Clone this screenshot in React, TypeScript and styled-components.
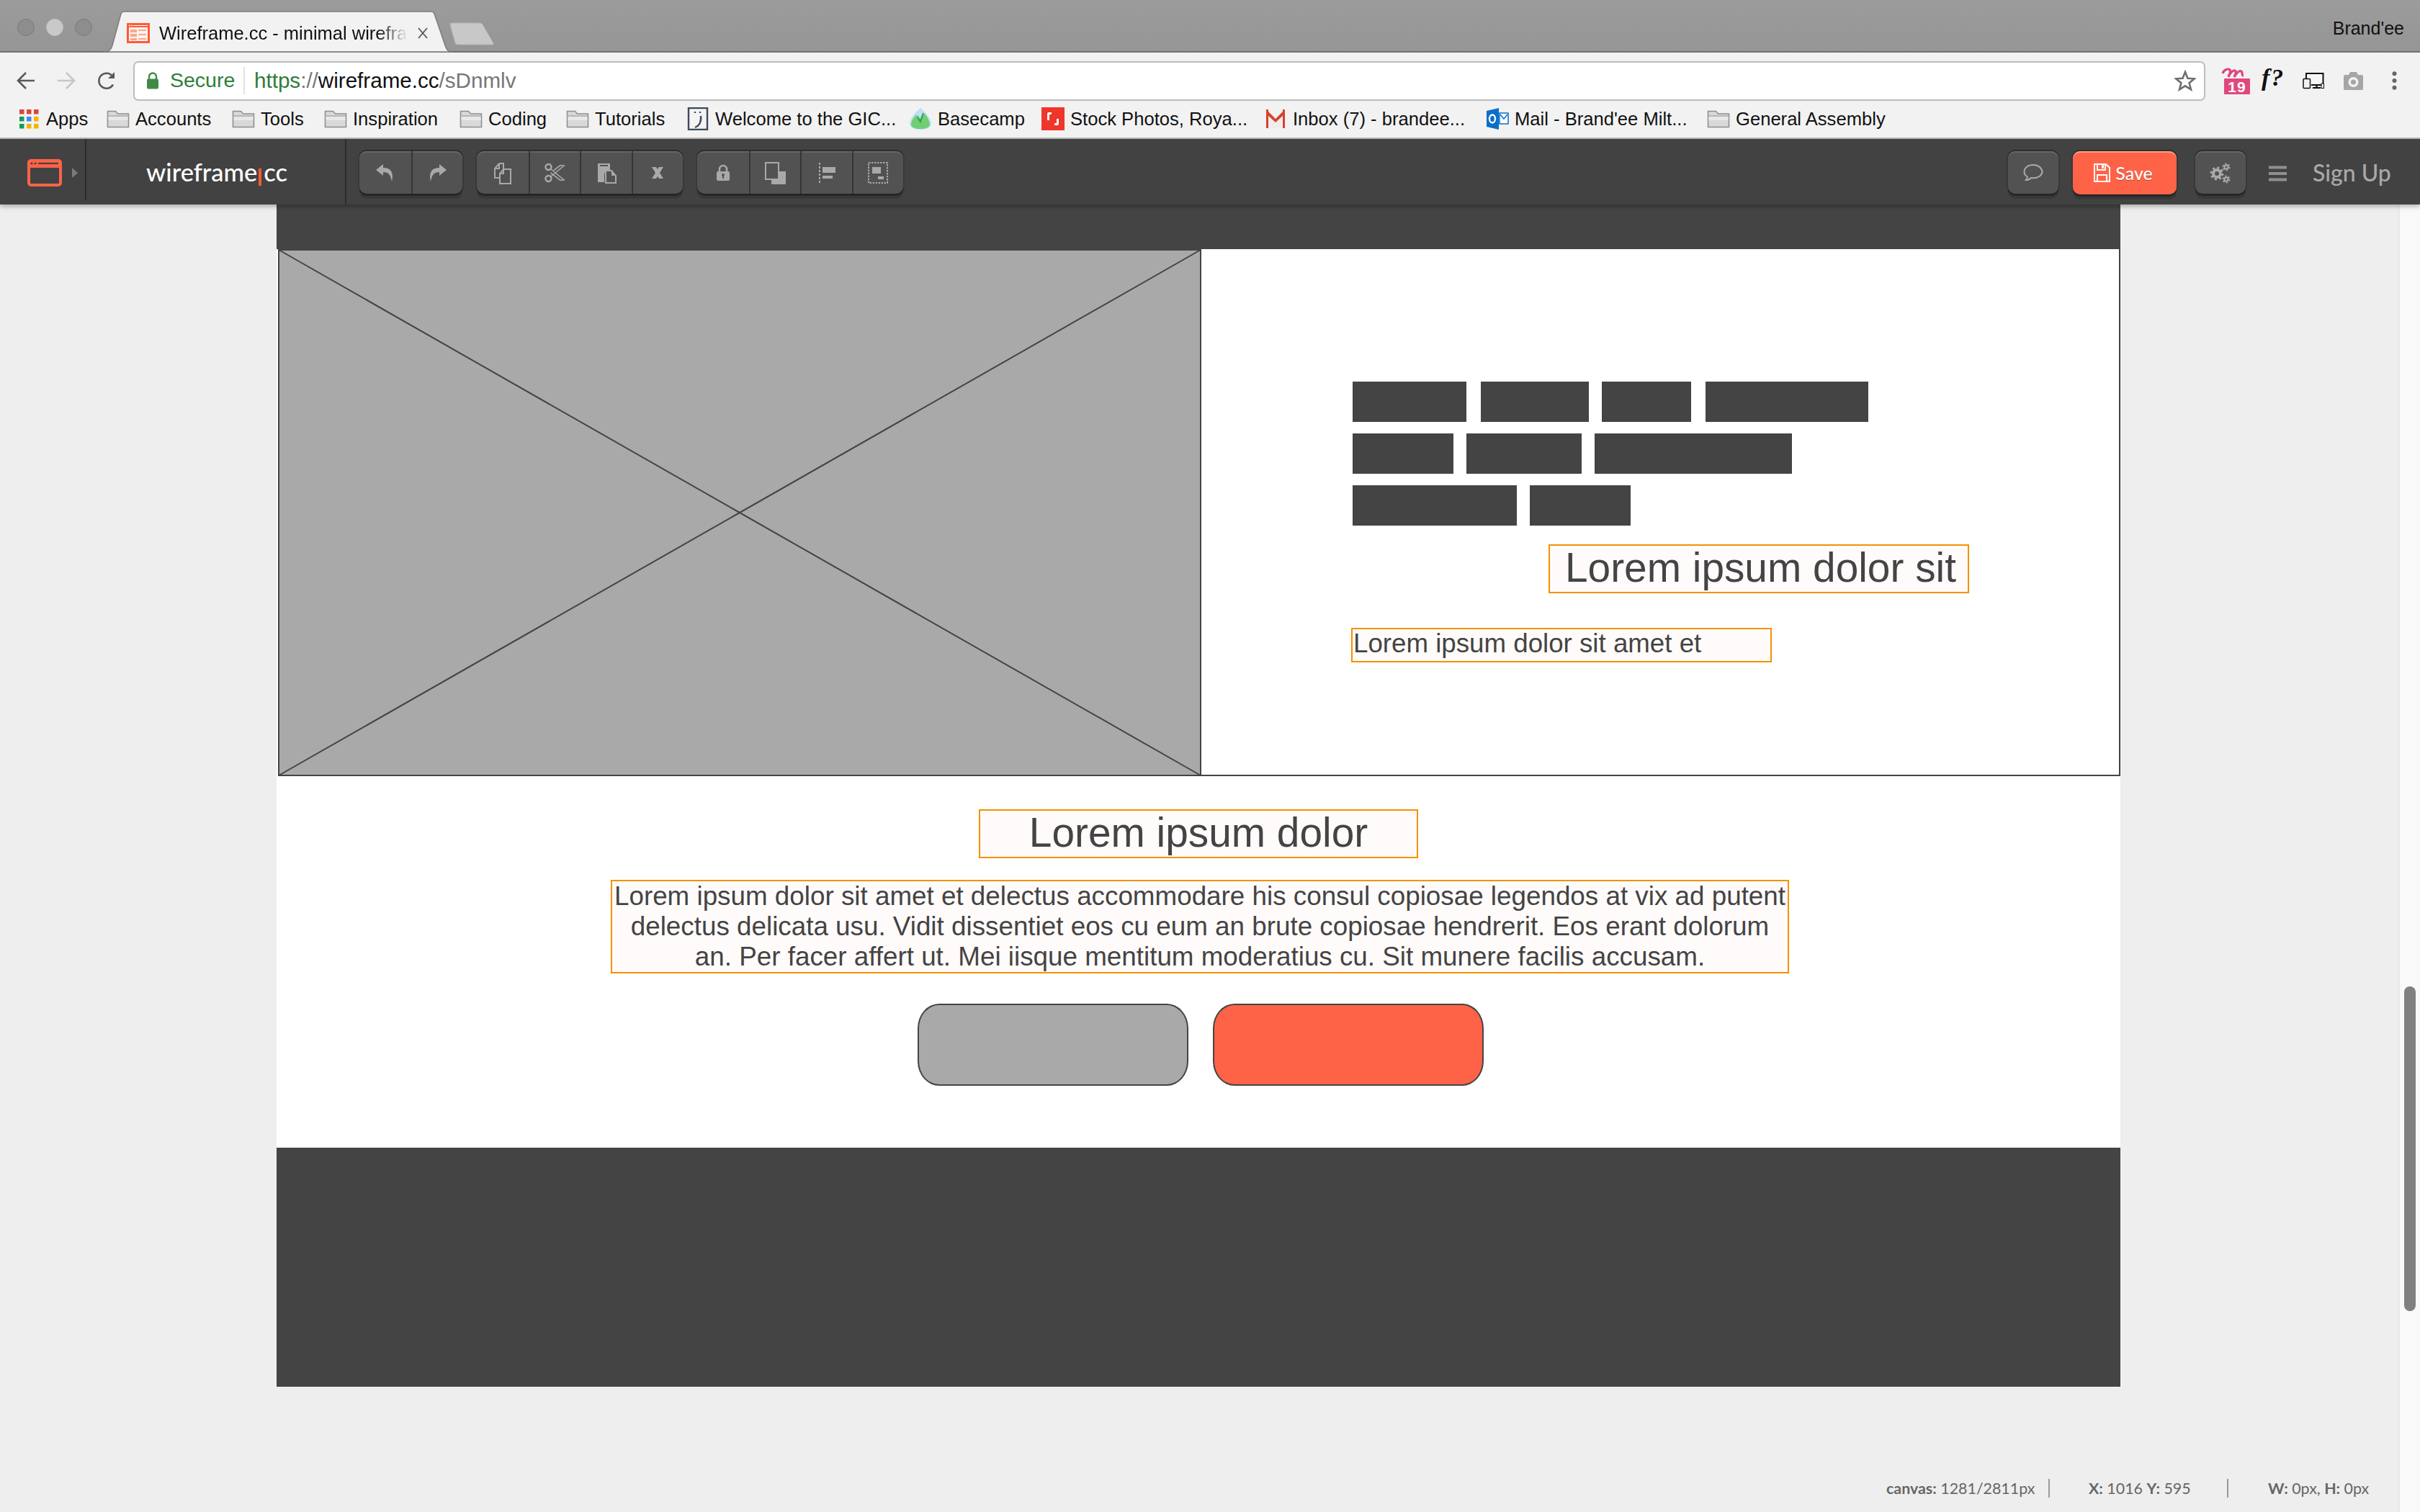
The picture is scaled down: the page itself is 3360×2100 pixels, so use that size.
import React from "react";
import styled, { createGlobalStyle } from "styled-components";

const UI = `"Liberation Sans", Arial, sans-serif`;
const LATO = `Lato, "Open Sans", sans-serif`;

const Global = createGlobalStyle`
  html, body { margin: 0; padding: 0; background: #eeeeee; overflow: hidden; }
  * { box-sizing: border-box; }
`;

const Page = styled.div`
  width: 3360px; height: 2100px; display: flex; flex-direction: column; background: #eeeeee; position: relative; overflow: hidden;
`;

/* ---------- browser chrome ---------- */
const TabStrip = styled.div`
  height: 73px; flex: none; display: flex; align-items: flex-end; padding-left: 24px;
  background: linear-gradient(#9c9c9c, #959595); border-bottom: 2px solid #717171; position: relative;
`;
const Lights = styled.div`
  display: flex; gap: 16px; align-self: flex-start; margin-top: 26px; width: 120px;
`;
const Light = styled.span<{ $on?: boolean }>`
  width: 24px; height: 24px; border-radius: 50%;
  background: ${p => (p.$on ? "#c9c9c9" : "#8d8d8d")};
  border: 1px solid ${p => (p.$on ? "#c0c0c0" : "#7a7a7a")};
`;
const Tab = styled.div`
  width: 484px; height: 58px; position: relative; flex: none; display: flex; align-items: center; padding: 4px 0 0 32px; margin-bottom: -2px;
`;
const TabShape = styled.svg`
  position: absolute; inset: 0; width: 100%; height: 100%;
`;
const TabIcon = styled.svg`
  width: 32px; height: 28px; position: relative; flex: none;
`;
const TabTitle = styled.span`
  position: relative; margin-left: 13px; width: 345px; overflow: hidden; white-space: nowrap;
  font: 25.5px ${UI}; color: #111;
  -webkit-mask-image: linear-gradient(90deg, #000 88%, transparent 100%);
  mask-image: linear-gradient(90deg, #000 88%, transparent 100%);
`;
const TabClose = styled.svg`
  position: relative; width: 14px; height: 16px; margin-left: 14px; flex: none;
`;
const NewTab = styled.svg`
  width: 64px; height: 32px; flex: none; margin: 0 0 8px -5px; position: relative;
`;
const Account = styled.span`
  position: absolute; right: 22px; top: 25px; font: 25px ${UI}; color: #111;
`;

const Chrome = styled.div`
  height: 120px; flex: none; background: #f2f2f2; border-bottom: 2px solid #b9b9b9; display: flex; flex-direction: column;
`;
const NavRow = styled.div`
  height: 70px; flex: none; display: flex; align-items: center; padding: 8px 0 0 22px;
`;
const NavIcon = styled.svg<{ $gap?: number }>`
  width: 28px; height: 28px; flex: none; margin-left: ${p => p.$gap ?? 0}px;
`;
const Omnibox = styled.div`
  flex: 1 1 auto; height: 55px; margin-left: 23px; background: #fff; border: 2px solid #bdbdbd; border-radius: 7px;
  display: flex; align-items: center; padding-left: 16px;
`;
const Lock = styled.svg`
  width: 18px; height: 24px; flex: none;
`;
const Secure = styled.span`
  font: 28.5px ${UI}; color: #2f7d38; margin-left: 15px; width: 104px; height: 38px; line-height: 36px; border-right: 2px solid #e2e2e2; flex: none;
`;
const Url = styled.span`
  font: 29.6px ${UI}; color: #777; margin-left: 13px; white-space: nowrap; flex: 1;
`;
const UrlScheme = styled.span`
  color: #2f7d38;
`;
const UrlHost = styled.span`
  color: #111;
`;
const Star = styled.svg`
  width: 30px; height: 30px; flex: none; margin-right: 11px;
`;
const Extensions = styled.div`
  width: 298px; flex: none; height: 56px; display: flex; align-items: center; padding-left: 22px;
`;
const ExtIcon = styled.svg<{ $w: number; $h: number; $gap?: number }>`
  width: ${p => p.$w}px; height: ${p => p.$h}px; flex: none; margin-left: ${p => p.$gap ?? 0}px; overflow: visible;
`;
const BookmarkRow = styled.div`
  height: 48px; flex: none; display: flex; align-items: center; padding: 0 0 4px 26px;
`;
const Bookmark = styled.div<{ $w: number }>`
  width: ${p => p.$w}px; flex: none; display: flex; align-items: center; gap: 8px;
  font: 25.6px ${UI}; color: #111; white-space: nowrap;
`;
const BmIcon = styled.svg`
  width: 32px; height: 32px; flex: none;
`;
const AppsIcon = styled(BmIcon)`
  width: 28px; height: 28px; margin-right: 2px;
`;

/* ---------- app toolbar ---------- */
const AppBar = styled.div`
  height: 91px; flex: none; background: #424242; display: flex; align-items: stretch; position: relative; z-index: 2;
  box-shadow: 0 3px 6px rgba(0, 0, 0, 0.28);
`;
const LogoCell = styled.div`
  width: 120px; height: 85px; flex: none; border-right: 2px solid #2b2b2b; display: flex; align-items: center; padding-left: 38px; gap: 14px;
`;
const LogoMark = styled.svg`
  width: 48px; height: 38px; flex: none; margin-top: 8px;
`;
const LogoCaret = styled.span`
  width: 0; height: 0; border-left: 8px solid #7b7b7b; border-top: 7px solid transparent; border-bottom: 7px solid transparent; margin-top: 8px;
`;
const BrandCell = styled.div`
  width: 361px; flex: none; border-right: 2px solid #2b2b2b; display: flex; align-items: center; padding: 0 0 0 83px;
  font: 500 34.5px ${LATO}; color: #fff;
`;
const BrandBar = styled.span`
  width: 4px; height: 24px; background: #ff5a36; margin: 14px 3px 0 2px; flex: none;
`;
const ToolGroups = styled.div`
  display: flex; align-items: flex-start; padding: 17px 0 0 18px; gap: 20px; flex: 1;
`;
const BtnGroup = styled.div`
  display: flex; border-radius: 10px; background: #525252; height: 59px; flex: none;
  box-shadow: 0 -2px 0 #2e2e2e, 0 3px 0 #262626, 0 7px 0 #383838, 0 0 0 2px #393939, inset 0 2px 0 #666;
`;
const ToolBtn = styled.div<{ $w?: number }>`
  width: ${p => p.$w ?? 71.5}px; height: 59px; display: flex; align-items: center; justify-content: center; flex: none;
  & + & { border-left: 2px solid #353535; }
`;
const ToolIcon = styled.svg`
  width: 32px; height: 32px; flex: none;
`;
const RightTools = styled.div`
  display: flex; align-items: flex-start; padding: 17px 0 0 0; flex: none;
`;
const SaveBtn = styled.div`
  width: 144px; height: 60px; margin: 0 26px 0 20px; border-radius: 10px; background: #ff6347; display: flex; align-items: center; justify-content: center; gap: 7px;
  color: #fff; font: 500 25px ${LATO}; flex: none; padding-right: 4px; text-shadow: 0 1px 0 rgba(120, 40, 20, .6);
  box-shadow: 0 -2px 0 #2e2e2e, inset 0 2px 0 #ff9d88, 0 3px 0 #262626, 0 7px 0 #383838, 0 0 0 2px #393939;
`;
const SaveIcon = styled.svg`
  width: 23px; height: 26px; flex: none;
`;
const Hamburger = styled.svg`
  width: 25px; height: 24px; flex: none; margin: 19px 36px 0 32px;
`;
const SignUp = styled.span`
  font: 500 32px ${LATO}; color: #a9a9a9; width: 149px; margin-top: 10px; flex: none; white-space: nowrap;
`;

/* ---------- editor ---------- */
const Editor = styled.div`
  flex: 1; display: flex; min-height: 0;
`;
const Stage = styled.div`
  flex: 1; padding-left: 384px; min-width: 0;
`;
const Canvas = styled.div`
  width: 2560px; background: #fff;
`;
const Band = styled.div<{ $h: number }>`
  height: ${p => p.$h}px; background: #444;
`;
const Hero = styled.div`
  height: 732px; display: flex;
`;
const Placeholder = styled.svg`
  width: 1282px; height: 732px; flex: none; margin-left: 2px; display: block;
`;
const HeroPanel = styled.div`
  flex: 1; border-right: 2px solid #444; border-bottom: 2px solid #444; padding: 184px 0 0 208px; display: flex; flex-direction: column;
`;
const BarRow = styled.div`
  display: flex; margin-bottom: 16px; padding-left: 2px;
`;
const Bar = styled.span<{ $w: number; $gap: number }>`
  width: ${p => p.$w}px; height: 56px; background: #444; margin-right: ${p => p.$gap}px; flex: none;
`;
const TextBox = styled.div`
  border: 2px solid #f39200; background: #fffbfa; color: #444; font-family: ${UI};
`;
const HeadingRight = styled(TextBox)`
  width: 584px; height: 68px; margin: 10px 0 0 274px; font-size: 56.8px; line-height: 62px; padding-left: 21px; white-space: nowrap;
`;
const SubLine = styled(TextBox)`
  width: 584px; height: 48px; margin-top: 48px; font-size: 36.7px; line-height: 40px; padding-left: 1px; white-space: nowrap;
`;
const Lower = styled.div`
  height: 516px; display: flex; flex-direction: column; align-items: center; padding-top: 46px;
`;
const HeadingCenter = styled(TextBox)`
  width: 610px; height: 68px; font-size: 56.8px; line-height: 62px; text-align: center; white-space: nowrap;
`;
const Paragraph = styled(TextBox)`
  width: 1636px; height: 130px; margin: 30px 0 0 4px; font-size: 36.8px; line-height: 42px; text-align: center; white-space: nowrap;
`;
const Actions = styled.div`
  display: flex; gap: 34px; margin: 42px 0 0 6px;
`;
const ActionBtn = styled.div<{ $bg: string }>`
  width: 376px; height: 114px; border-radius: 30px / 34px; border: 2px solid #444; background: ${p => p.$bg};
`;
const ScrollTrack = styled.div`
  width: 30px; flex: none; background: #f9f9f9; border-left: 2px solid #e8e8e8; padding: 1086px 0 0 6px;
`;
const ScrollThumb = styled.div`
  width: 16px; height: 451px; border-radius: 8px; background: #808080;
`;
const Status = styled.div`
  position: absolute; left: 2619px; top: 2054px; display: flex; align-items: center; height: 26px;
  font: 21.4px ${LATO}; color: #666; white-space: nowrap;
`;
const StatusCell = styled.span<{ $w: number; $sep?: boolean }>`
  width: ${p => p.$w}px; flex: none; height: 26px; line-height: 26px;
  border-right: ${p => (p.$sep ? "2px solid #999" : "0")};
  b { font-weight: 700; }
`;

const Folder = () => (
  <BmIcon viewBox="0 0 32 32">
    <path d="M1.5 27.500V5.500h11l3 3.500h15v18.500z" fill="#d9d9d9" stroke="#8f8f8f" strokeWidth="1.6" />
    <path d="M1.500 12h29" stroke="#a8a8a8" strokeWidth="1.4" />
    <path d="M2.500 13h27v5h-27z" fill="#e8e8e8" />
  </BmIcon>
);

const Icon = ({ d, fill = "#a9a9a9" }: { d: string; fill?: string }) => (
  <ToolIcon viewBox="0 0 32 32"><path d={d} fill={fill} /></ToolIcon>
);

export default function App() {
  return (
    <Page>
      <Global />
      <TabStrip>
        <Lights>
          <Light />
          <Light $on />
          <Light />
        </Lights>
        <Tab>
          <TabShape viewBox="0 0 484 58" preserveAspectRatio="none">
            <path d="M0 57 C8 57 10 54 12 48 L24 4 Q25 1 29 1 H454 Q458 1 459 4 L474 48 C476 54 478 57 484 57 Z" fill="#f2f2f2" stroke="#7c7c7c" strokeWidth="1.5" />
          </TabShape>
          <TabIcon viewBox="0 0 32 28">
            <rect x="1.500" y="1.500" width="29" height="25" fill="#fdf3ee" stroke="#ff5a36" strokeWidth="3" />
            <rect x="1" y="1" width="30" height="5" fill="#ff5a36" />
            <circle cx="4" cy="3.500" r="1" fill="#fff" /><circle cx="7" cy="3.500" r="1" fill="#fff" />
            <path d="M9 3.500h20" stroke="#fff" strokeWidth="1" />
            <rect x="5" y="9" width="9" height="4" fill="#f6a88f" />
            <rect x="5" y="15" width="9" height="4" fill="#f6a88f" />
            <rect x="5" y="21" width="9" height="3" fill="#f6a88f" />
            <rect x="16" y="9" width="11" height="2" fill="#f6a88f" />
            <rect x="16" y="15" width="11" height="2" fill="#f6a88f" />
            <rect x="16" y="21" width="11" height="2" fill="#f6a88f" />
          </TabIcon>
          <TabTitle>Wireframe.cc - minimal wirefra</TabTitle>
          <TabClose viewBox="0 0 14 16"><path d="M1 1l12 14M13 1L1 15" stroke="#555" strokeWidth="1.8" /></TabClose>
        </Tab>
        <NewTab viewBox="0 0 64 32">
          <path d="M2 3 Q1 1 4 1 H43 Q46 1 47 3 L62 29 Q63 31 60 31 H13 Q10 31 9 29 Z" fill="#c8c8c8" stroke="#b2b2b2" />
        </NewTab>
        <Account>Brand'ee</Account>
      </TabStrip>

      <Chrome>
        <NavRow>
          <NavIcon viewBox="0 0 28 28"><path d="M26 14H4M14 3L3 14l11 11" fill="none" stroke="#5a5a5a" strokeWidth="2.6" /></NavIcon>
          <NavIcon viewBox="0 0 28 28" $gap={28}><path d="M2 14h22M14 3l11 11-11 11" fill="none" stroke="#c7c7c7" strokeWidth="2.6" /></NavIcon>
          <NavIcon viewBox="0 0 28 28" $gap={28}><path d="M23 19.500A10.500 10.500 0 1 1 22 7.500" fill="none" stroke="#5a5a5a" strokeWidth="2.6" /><path d="M25 2v9h-9z" fill="#5a5a5a" /></NavIcon>
          <Omnibox>
            <Lock viewBox="0 0 18 24"><path d="M4 10V6.500a5 5 0 0 1 10 0V10" fill="none" stroke="#3f8a47" strokeWidth="2.4" /><rect x="1" y="9.500" width="16" height="14" rx="2" fill="#3f8a47" /></Lock>
            <Secure>Secure</Secure>
            <Url><UrlScheme>https</UrlScheme>://<UrlHost>wireframe.cc</UrlHost>/sDnmlv</Url>
            <Star viewBox="0 0 30 30"><path d="M15 3l3.500 8.700 9.300.6-7.200 6 2.400 9-8-5-8 5 2.400-9-7.200-6 9.300-.6z" fill="none" stroke="#6e6e6e" strokeWidth="2.6" /></Star>
          </Omnibox>
          <Extensions>
            <ExtIcon viewBox="0 0 40 37" $w={40} $h={37}>
              <path d="M2 8C4 2 10 1 12 3c2 2-1 6-2 10 2-5 6-10 9-9 3 1 0 6-1 9 3-5 7-10 10-8 2 2 0 6 3 6" fill="none" stroke="#e0457f" strokeWidth="3.2" />
              <rect x="4" y="15" width="36" height="22" rx="1" fill="#e0487c" />
              <text x="22" y="33.500" textAnchor="middle" fontFamily="Liberation Sans" fontWeight="700" fontSize="21" letterSpacing="1" fill="#fff">19</text>
            </ExtIcon>
            <ExtIcon viewBox="0 0 32 30" $w={32} $h={30} $gap={16}>
              <text x="0" y="22" fontFamily="Liberation Serif" fontStyle="italic" fontWeight="700" fontSize="34" letterSpacing="2" fill="#111">f?</text>
            </ExtIcon>
            <ExtIcon viewBox="0 0 30 22" $w={30} $h={22} $gap={25}>
              <path d="M5 8V1h23.500v16H12" fill="#f8f8f8" stroke="#111" strokeWidth="2" />
              <rect x="1" y="8.500" width="9.500" height="13" rx="1" fill="#f2f2f2" stroke="#111" strokeWidth="1.5" />
              <path d="M14 21h11M19.500 17v4" stroke="#111" strokeWidth="2.200" />
              <rect x="26" y="15" width="3.500" height="6.500" fill="#f2f2f2" stroke="#111" strokeWidth="1" />
            </ExtIcon>
            <ExtIcon viewBox="0 0 29 25" $w={29} $h={25} $gap={26}>
              <path d="M1 6a2 2 0 0 1 2-2h5l2-4h9l2 4h5a2 2 0 0 1 2 2v17a2 2 0 0 1-2 2H3a2 2 0 0 1-2-2z" fill="#a6a6a6" />
              <circle cx="14.500" cy="14" r="7" fill="#f2f2f2" /><circle cx="14.500" cy="14" r="3.600" fill="#a6a6a6" />
            </ExtIcon>
            <ExtIcon viewBox="0 0 7 26" $w={7} $h={26} $gap={39}>
              <circle cx="3.500" cy="3.200" r="3" fill="#666" /><circle cx="3.500" cy="13" r="3" fill="#666" /><circle cx="3.500" cy="22.800" r="3" fill="#666" />
            </ExtIcon>
          </Extensions>
        </NavRow>
        <BookmarkRow>
          <Bookmark $w={122}>
            <AppsIcon viewBox="0 0 28 28">
              {[["#db4437", "#db4437", "#db4437"], ["#0f9d58", "#4285f4", "#f4b400"], ["#0f9d58", "#f4b400", "#f4b400"]].map((r, y) =>
                r.map((c, x) => <rect key={`${x}${y}`} x={x * 10 + 1} y={y * 10 + 1} width="6.5" height="6.5" fill={c} />))}
            </AppsIcon>
            <span>Apps</span>
          </Bookmark>
          <Bookmark $w={174}><Folder /><span>Accounts</span></Bookmark>
          <Bookmark $w={128}><Folder /><span>Tools</span></Bookmark>
          <Bookmark $w={188}><Folder /><span>Inspiration</span></Bookmark>
          <Bookmark $w={148}><Folder /><span>Coding</span></Bookmark>
          <Bookmark $w={167}><Folder /><span>Tutorials</span></Bookmark>
          <Bookmark $w={309}>
            <BmIcon viewBox="0 0 32 32">
              <path d="M3 1h26v30H3z" fill="#f3f3f3" stroke="#3d4a5c" strokeWidth="2.4" />
              <path d="M19 6v2M12 6v2M20 12c1 9-3 14-8 16" fill="none" stroke="#3d4a5c" strokeWidth="2.4" />
            </BmIcon>
            <span>Welcome to the GIC...</span>
          </Bookmark>
          <Bookmark $w={184}>
            <BmIcon viewBox="0 0 32 32">
              <path d="M16 1C8 7 1 17 1 22c0 6 7 9 15 9s15-3 15-9C31 17 24 7 16 1z" fill="#bfe0f5" />
              <path d="M3 24c0-5 5-13 8-13 2 0 3 3 5 5 1-4 3-8 5-7 3 1 8 10 8 15 0 4-6 6-13 6S3 28 3 24z" fill="#6fcf75" />
              <path d="M12 14l4 6 4-12" fill="none" stroke="#33a04a" strokeWidth="2" />
            </BmIcon>
            <span>Basecamp</span>
          </Bookmark>
          <Bookmark $w={309}>
            <BmIcon viewBox="0 0 32 32">
              <rect width="32" height="32" fill="#f0352a" />
              <path d="M9 7h5v3h-3v8H8V9zM23 25h-5v-3h3v-6h3v7z" fill="#fff" />
            </BmIcon>
            <span>Stock Photos, Roya...</span>
          </Bookmark>
          <Bookmark $w={308}>
            <BmIcon viewBox="0 0 32 32">
              <path d="M3 3l13 12L29 3v26H3z" fill="#eeeeee" />
              <path d="M3 3h3v26H3zM26 3h3v26h-3zM3 3l13 13L29 3v6L16 21 3 9z" fill="#d8412f" />
            </BmIcon>
            <span>Inbox (7) - brandee...</span>
          </Bookmark>
          <Bookmark $w={307}>
            <BmIcon viewBox="0 0 32 32">
              <path d="M1 5l17-4v30L1 27z" fill="#0a6fc9" />
              <ellipse cx="9" cy="16" rx="4" ry="5.500" fill="none" stroke="#fff" strokeWidth="2.4" />
              <rect x="19" y="8" width="12" height="15" fill="#fff" stroke="#0a6fc9" strokeWidth="1.5" />
              <path d="M20 10l5 6 5-6" fill="none" stroke="#0a6fc9" strokeWidth="1.5" />
            </BmIcon>
            <span>Mail - Brand'ee Milt...</span>
          </Bookmark>
          <Bookmark $w={260}><Folder /><span>General Assembly</span></Bookmark>
        </BookmarkRow>
      </Chrome>

      <AppBar>
        <LogoCell>
          <LogoMark viewBox="0 0 48 38">
            <rect x="2" y="2" width="44" height="34" rx="3" fill="none" stroke="#ff6347" strokeWidth="4" />
            <rect x="1" y="1" width="46" height="11" rx="3" fill="#ff6347" />
            <circle cx="6" cy="6" r="1.600" fill="#424242" /><circle cx="11" cy="6" r="1.600" fill="#424242" />
            <path d="M15 6h28" stroke="#424242" strokeWidth="2.200" />
          </LogoMark>
          <LogoCaret />
        </LogoCell>
        <BrandCell>wireframe<BrandBar />cc</BrandCell>
        <ToolGroups>
          <BtnGroup>
            <ToolBtn><Icon d="M13 4L3 12l10 8v-5c7 0 10 3 12 13 3-12-1-19-12-19z" /></ToolBtn>
            <ToolBtn><Icon d="M19 4l10 8-10 8v-5c-7 0-10 3-12 13-3-12 1-19 12-19z" /></ToolBtn>
          </BtnGroup>
          <BtnGroup>
            <ToolBtn>
              <ToolIcon viewBox="0 0 32 32" fill="none" stroke="#a9a9a9" strokeWidth="2">
                <path d="M11 3h6v8M11 3L5 10v13h7M5 10h6V3" />
                <path d="M17 11h10v20H12V17z" /><path d="M12 17h5v-6" />
              </ToolIcon>
            </ToolBtn>
            <ToolBtn>
              <ToolIcon viewBox="0 0 32 32" fill="none" stroke="#a9a9a9" strokeWidth="1.6">
                <circle cx="7.500" cy="8" r="4" strokeWidth="2.400" /><circle cx="7.500" cy="24" r="4" strokeWidth="2.400" />
                <path d="M10.500 10.500L29 26l-5 .5-13.500-10.500M10.500 21.500L29 6l-5-.5-9 7" />
              </ToolIcon>
            </ToolBtn>
            <ToolBtn>
              <ToolIcon viewBox="0 0 32 32">
                <path d="M4 3h17v9h-4l-4 5v12H4z" fill="#a9a9a9" /><path d="M7 5h11v2H7z" fill="#525252" />
                <path d="M15 13h8l6 7v10H15z" fill="#525252" stroke="#a9a9a9" strokeWidth="2" />
                <path d="M23 13l6 7h-6z" fill="#a9a9a9" />
              </ToolIcon>
            </ToolBtn>
            <ToolBtn><Icon d="M8 8h6l2 3 2-3h6l-5 8 5 8h-6l-2-3-2 3H8l5-8z" /></ToolBtn>
          </BtnGroup>
          <BtnGroup>
            <ToolBtn>
              <ToolIcon viewBox="0 0 32 32">
                <path d="M11 15V11a5 5 0 0 1 10 0v4" fill="none" stroke="#a9a9a9" strokeWidth="2.600" />
                <rect x="7" y="14" width="18" height="13" rx="2" fill="#a9a9a9" />
                <path d="M16 17a2 2 0 0 0-1 3.700V24h2v-3.300A2 2 0 0 0 16 17z" fill="#525252" />
              </ToolIcon>
            </ToolBtn>
            <ToolBtn>
              <ToolIcon viewBox="0 0 32 32">
                <rect x="11" y="14" width="20" height="18" fill="#a9a9a9" />
                <rect x="3" y="2" width="18" height="23" fill="#525252" stroke="#a9a9a9" strokeWidth="2" />
              </ToolIcon>
            </ToolBtn>
            <ToolBtn>
              <ToolIcon viewBox="0 0 32 32">
                <path d="M6 2v28" stroke="#a9a9a9" strokeWidth="2" strokeDasharray="3 2" />
                <rect x="10" y="8" width="18" height="8" fill="#a9a9a9" /><rect x="10" y="20" width="14" height="4" fill="#a9a9a9" />
              </ToolIcon>
            </ToolBtn>
            <ToolBtn>
              <ToolIcon viewBox="0 0 32 32">
                <rect x="3" y="2" width="26" height="28" fill="none" stroke="#a9a9a9" strokeWidth="2" strokeDasharray="2.400 1.600" />
                <rect x="8" y="8" width="12" height="9" fill="#a9a9a9" /><rect x="16" y="21" width="8" height="4" fill="#a9a9a9" />
              </ToolIcon>
            </ToolBtn>
          </BtnGroup>
        </ToolGroups>
        <RightTools>
          <BtnGroup>
            <ToolBtn $w={70}>
              <ToolIcon viewBox="0 0 32 32" fill="none" stroke="#a9a9a9" strokeWidth="2">
                <path d="M16 5C9 5 3.500 9 3.500 14.500c0 3 1.800 5.500 4.500 7-.2 2-1 3.500-2 4.500 3 0 5.500-1.200 7-3 1 .2 2 .3 3 .3 7 0 12.500-4 12.500-8.800S23 5 16 5z" />
              </ToolIcon>
            </ToolBtn>
          </BtnGroup>
          <SaveBtn>
            <SaveIcon viewBox="0 0 23 26" fill="none" stroke="#fff" strokeWidth="2">
              <path d="M1 1h16l5 5v19H1z" /><path d="M5 1v8h11V1" /><path d="M5 25v-9h13v9" /><rect x="11" y="2" width="3" height="5" fill="#fff" stroke="none" />
            </SaveIcon>
            Save
          </SaveBtn>
          <BtnGroup>
            <ToolBtn $w={70}>
              <ToolIcon viewBox="0 0 32 32" fill="none" stroke="#a9a9a9">
                <circle cx="11" cy="17" r="5" strokeWidth="4" />
                <circle cx="11" cy="17" r="8" strokeWidth="2.800" strokeDasharray="3.100 3.180" />
                <circle cx="24" cy="8" r="2.600" strokeWidth="2.200" />
                <circle cx="24" cy="8" r="4.600" strokeWidth="1.800" strokeDasharray="2.400 2.420" />
                <circle cx="24" cy="25" r="2.600" strokeWidth="2.200" />
                <circle cx="24" cy="25" r="4.600" strokeWidth="1.800" strokeDasharray="2.400 2.420" />
              </ToolIcon>
            </ToolBtn>
          </BtnGroup>
          <Hamburger viewBox="0 0 25 24"><path d="M0 1.500h25v4H0zM0 10h25v4H0zM0 18.500h25v4H0z" fill="#8f8f8f" /></Hamburger>
          <SignUp>Sign Up</SignUp>
        </RightTools>
      </AppBar>

      <Editor>
        <Stage>
          <Canvas>
            <Band $h={62} />
            <Hero>
              <Placeholder viewBox="0 0 1282 732" preserveAspectRatio="none">
                <rect x="1" y="1" width="1280" height="730" fill="#a9a9a9" stroke="#444" strokeWidth="2" />
                <path d="M1 1L1281 731M1281 1L1 731" stroke="#444" strokeWidth="2" />
              </Placeholder>
              <HeroPanel>
                <BarRow>
                  <Bar $w={158} $gap={20} /><Bar $w={150} $gap={18} /><Bar $w={124} $gap={20} /><Bar $w={226} $gap={0} />
                </BarRow>
                <BarRow>
                  <Bar $w={140} $gap={18} /><Bar $w={160} $gap={18} /><Bar $w={274} $gap={0} />
                </BarRow>
                <BarRow>
                  <Bar $w={228} $gap={18} /><Bar $w={140} $gap={0} />
                </BarRow>
                <HeadingRight>Lorem ipsum dolor sit</HeadingRight>
                <SubLine>Lorem ipsum dolor sit amet et</SubLine>
              </HeroPanel>
            </Hero>
            <Lower>
              <HeadingCenter>Lorem ipsum dolor</HeadingCenter>
              <Paragraph>
                Lorem ipsum dolor sit amet et delectus accommodare his consul copiosae legendos at vix ad putent<br />
                delectus delicata usu. Vidit dissentiet eos cu eum an brute copiosae hendrerit. Eos erant dolorum<br />
                an. Per facer affert ut. Mei iisque mentitum moderatius cu. Sit munere facilis accusam.
              </Paragraph>
              <Actions>
                <ActionBtn $bg="#a9a9a9" />
                <ActionBtn $bg="#ff6347" />
              </Actions>
            </Lower>
            <Band $h={332} />
          </Canvas>
        </Stage>
        <ScrollTrack><ScrollThumb /></ScrollTrack>
      </Editor>

      <Status>
        <StatusCell $w={227} $sep><b>canvas:</b> 1281/2811px</StatusCell>
        <StatusCell $w={54} />
        <StatusCell $w={194} $sep><b>X:</b> 1016 <b>Y:</b> 595</StatusCell>
        <StatusCell $w={55} />
        <StatusCell $w={150}><b>W:</b> 0px, <b>H:</b> 0px</StatusCell>
      </Status>
    </Page>
  );
}
